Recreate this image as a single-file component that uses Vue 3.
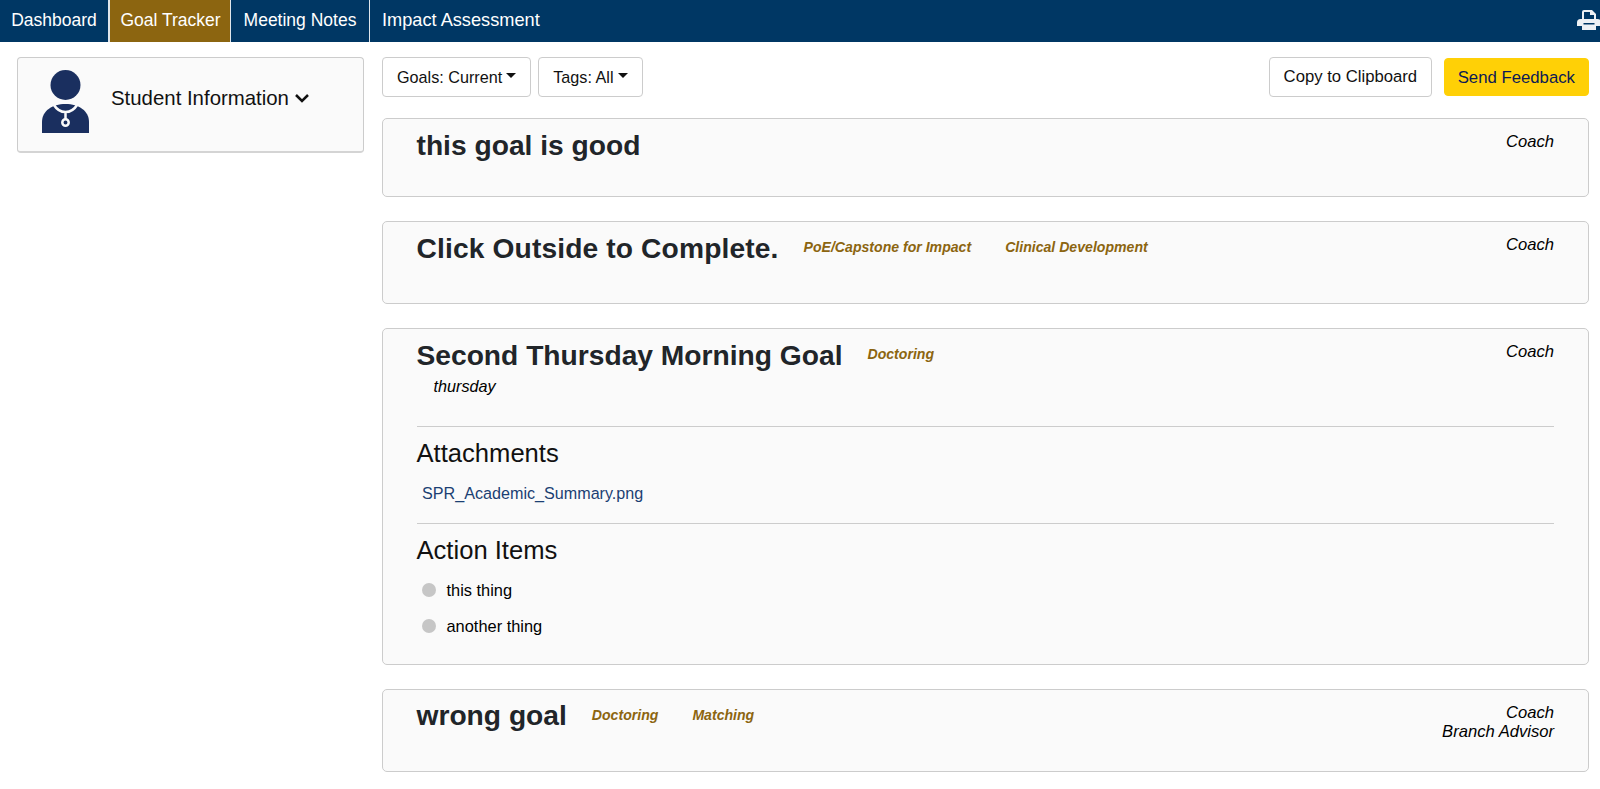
<script setup>
const tabs = [
  { label: 'Dashboard', active: false },
  { label: 'Goal Tracker', active: true },
  { label: 'Meeting Notes', active: false },
  { label: 'Impact Assessment', active: false },
]
const goals = [
  { title: 'this goal is good', tags: [], roles: ['Coach'], h: 'g1' },
  { title: 'Click Outside to Complete.', tags: ['PoE/Capstone for Impact', 'Clinical Development'], roles: ['Coach'], h: 'g2' },
  {
    title: 'Second Thursday Morning Goal', tags: ['Doctoring'], roles: ['Coach'], h: 'g3',
    note: 'thursday', attachment: 'SPR_Academic_Summary.png', items: ['this thing', 'another thing'],
  },
  { title: 'wrong goal', tags: ['Doctoring', 'Matching'], roles: ['Coach', 'Branch Advisor'], h: 'g4' },
]
</script>

<template>
  <div class="page">
    <nav class="nav">
      <a v-for="t in tabs" :key="t.label" class="tab" :class="{ active: t.active }">{{ t.label }}</a>
      <svg class="printer" width="24" height="22" viewBox="0 0 24 22">
        <path fill="#eef1f4" fill-rule="evenodd" d="M5 3a2 2 0 0 1 2-2h8l4 4v5h1.500A3.500 3.500 0 0 1 24 13.500V17h-5v4H5v-4H0v-3.500A3.500 3.500 0 0 1 3.500 10H5zM7 3v7h10V6h-4V3zM6.500 14v1.500h11V14z" />
      </svg>
    </nav>
    <div class="body">
      <aside class="side">
        <div class="student">
          <svg class="avatar" width="47" height="63" viewBox="0 0 47 63">
            <circle cx="23.5" cy="15" r="15" fill="#1a2f5f" />
            <path fill="#1a2f5f" d="M0 63V52C0 41 10 34 23.5 34S47 41 47 52v11z" />
            <path fill="none" stroke="#fafafa" stroke-width="2.500" d="M12 35c3 5 7 7 11.500 7S32 40 35 35M23.500 42v7" />
            <circle cx="23.500" cy="52.500" r="3.200" fill="#1a2f5f" stroke="#fafafa" stroke-width="2.500" />
          </svg>
          <span class="student-label">Student Information</span>
          <svg class="chev" width="14" height="9" viewBox="0 0 14 9">
            <path fill="none" stroke="#111" stroke-width="2.500" d="M1 1l6 6 6-6" />
          </svg>
        </div>
      </aside>
      <main class="main">
        <div class="toolbar">
          <button class="btn drop">Goals: Current<i class="caret"></i></button>
          <button class="btn drop">Tags: All<i class="caret"></i></button>
          <span class="spacer"></span>
          <button class="btn copy">Copy to Clipboard</button>
          <button class="btn send">Send Feedback</button>
        </div>
        <section v-for="g in goals" :key="g.title" class="goal" :class="g.h">
          <div class="goal-head">
            <div class="goal-left">
              <div class="title-row">
                <h2 class="title">{{ g.title }}</h2>
                <span v-for="tag in g.tags" :key="tag" class="tag">{{ tag }}</span>
              </div>
              <div v-if="g.note" class="note">{{ g.note }}</div>
            </div>
            <div class="roles">
              <div v-for="r in g.roles" :key="r">{{ r }}</div>
            </div>
          </div>
          <template v-if="g.attachment">
            <div class="block first">
              <h3 class="sub">Attachments</h3>
              <a class="file">{{ g.attachment }}</a>
            </div>
            <div class="block">
              <h3 class="sub">Action Items</h3>
              <ul class="items">
                <li v-for="i in g.items" :key="i"><span class="dot"></span>{{ i }}</li>
              </ul>
            </div>
          </template>
        </section>
      </main>
    </div>
  </div>
</template>

<style>
html, body { margin: 0; background: #fff; overflow: hidden; }
</style>

<style scoped>
.page { font-family: "Liberation Sans", Arial, sans-serif; color: #000; font-size: 16px; height: 789px; overflow: hidden; }
.nav { display: flex; height: 42px; background: #003764; overflow: hidden; position: relative; }
.tab { display: flex; align-items: center; padding: 0 0 1px; justify-content: center; height: 42px; color: #fff; font-size: 17.500px; border-right: 1px solid #dfe6ec; box-sizing: border-box; }
.tab:nth-child(1) { width: 109px; }
.tab:nth-child(2) { width: 122px; background: #8c6510; border-left: 1px solid #dfe6ec; padding-left: 1px; }
.tab:nth-child(3) { width: 139px; }
.tab:nth-child(4) { border-right: 0; padding: 0 0 2px 12px; font-size: 18.200px; }
.printer { position: absolute; left: 1577px; top: 9px; }
.body { display: flex; }
.side { width: 347px; margin-left: 17px; padding-top: 15px; flex: none; }
.student { height: 96px; box-sizing: border-box; background: #fafafa; border: 1px solid #ccc; border-bottom: 2px solid #d4d4d4; border-radius: 4px; display: flex; align-items: flex-start; padding-top: 11.500px; }
.avatar { margin-left: 24px; flex: none; }
.student-label { margin-left: 22px; margin-top: 16.500px; font-size: 20.400px; line-height: 24px; color: #111; }
.chev { margin-left: 6px; margin-top: 24px; }
.main { margin-left: 18px; width: 1207px; flex: none; padding-top: 15px; }
.toolbar { display: flex; align-items: center; gap: 7px; height: 40px; margin-bottom: 21px; }
.spacer { flex: 1; }
.btn { height: 40px; box-sizing: border-box; border: 1px solid #ccc; border-radius: 4px; background: #fff; font: 16.200px "Liberation Sans", Arial, sans-serif; color: #111; padding: 0 14px; display: inline-flex; align-items: center; }
.caret { display: inline-block; margin-left: 4px; margin-top: -3px; border-left: 5px solid transparent; border-right: 5px solid transparent; border-top: 5px solid #111; }
.btn.copy { font-size: 16.700px; }
.btn.send { height: 38px; margin-left: 5px; background: #ffd006; border-color: #ffd006; color: #0c1a55; padding: 1px 13px 0 12.500px; font-size: 16.750px; }
.goal { box-sizing: border-box; background: #fafafa; border: 1px solid #ccc; border-radius: 5px; padding: 0 34px 0 33.500px; margin-bottom: 24px; }
.g1 { height: 79px; }
.g2 { height: 83px; }
.g3 { height: 337px; }
.g4 { height: 83px; }
.goal-head { display: flex; justify-content: space-between; padding-top: 6.500px; }
.title-row { display: flex; align-items: center; }
.title { margin: 0; font-size: 28.200px; line-height: 38px; font-weight: 700; color: #212529; }
.g2 .title { letter-spacing: 0.130px; }
.g1 .title { margin-top: 0.500px; }
.g4 .title { margin-top: -1px; }
.tag { font-size: 14.100px; font-style: italic; font-weight: 700; color: #8c6510; margin-left: 25px; margin-top: -1px; }
.tag + .tag { margin-left: 34px; }
.note { font-style: italic; font-size: 16.200px; margin-left: 17px; line-height: 22px; margin-top: 1px; }
.roles { text-align: right; font-style: italic; font-size: 16.600px; line-height: 19px; padding-top: 6px; }
.block { border-top: 1px solid #ccc; height: 97px; box-sizing: border-box; }
.block.first { margin-top: 29.500px; }
.sub { margin: 0; font-weight: 400; font-size: 25.600px; line-height: 30px; padding-top: 11px; color: #111; }
.file { display: block; color: #1b3f73; margin: 14px 0 0 5.500px; line-height: 22px; font-size: 16.150px; }
.items { list-style: none; margin: 7px 0 0 5px; padding: 0; }
.items li { display: flex; align-items: center; height: 36px; font-size: 16.400px; }
.dot { width: 14px; height: 14px; border-radius: 50%; background: #c6c6c6; margin-right: 11px; }
</style>
